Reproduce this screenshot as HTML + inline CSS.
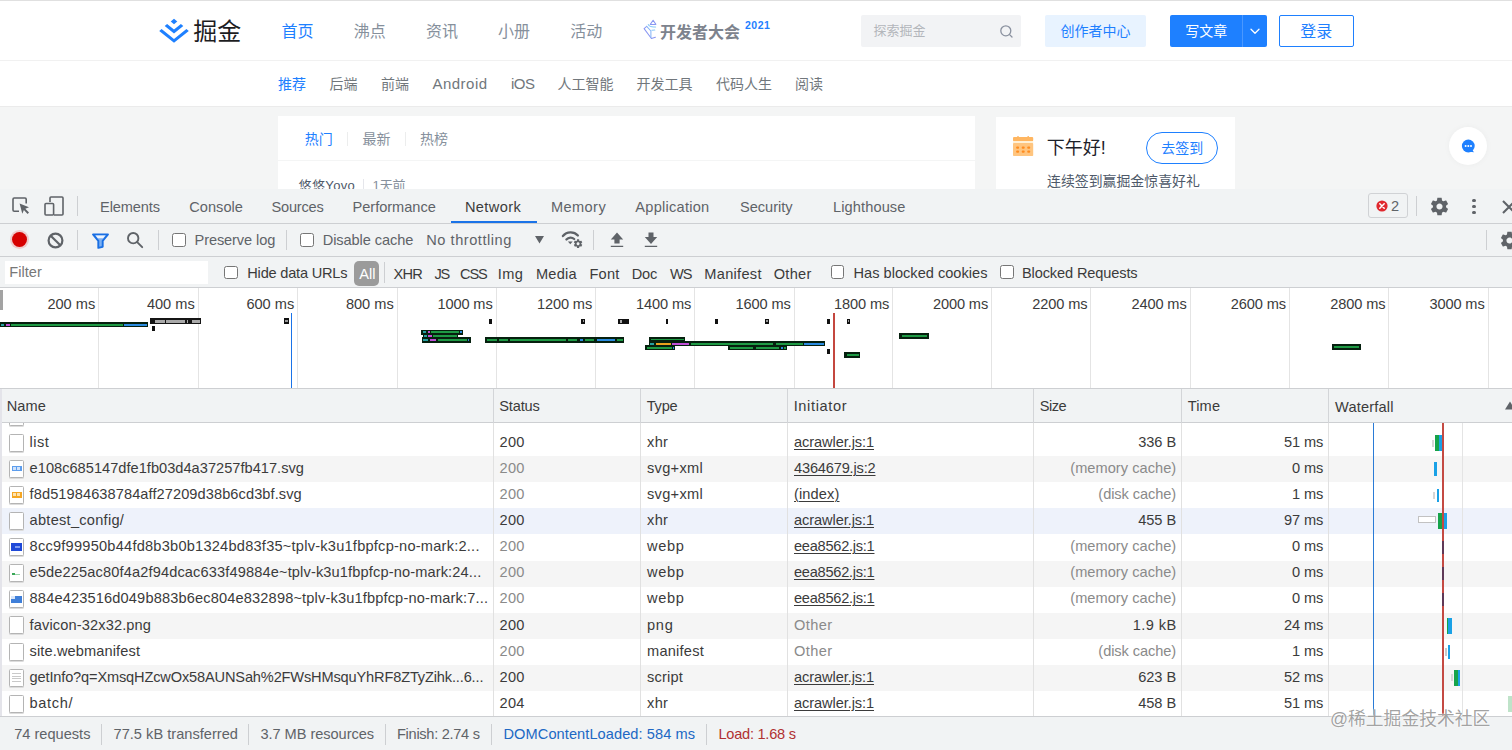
<!DOCTYPE html>
<html lang="zh">
<head>
<meta charset="utf-8">
<title>掘金 - DevTools Network</title>
<style>
*{box-sizing:border-box;margin:0;padding:0}
html,body{width:1512px;height:750px;overflow:hidden;background:#f4f5f5}
body{position:relative;font-family:"Liberation Sans","Noto Sans CJK SC",sans-serif;color:#333}
.abs{position:absolute;white-space:nowrap;display:block}
.cjk{font-family:"Liberation Sans","Noto Sans CJK SC",sans-serif}
.u{text-decoration:underline;text-underline-offset:2px;text-decoration-thickness:1px}
svg{position:absolute;overflow:visible}
.cb{position:absolute;width:13.5px;height:13.5px;border:1.3px solid #767676;border-radius:2.5px;background:#fff}
.fi{position:absolute;width:15px;height:18px;border:1px solid #b4b4b4;border-radius:1.5px;background:#fff;box-shadow:0 1px 0 #dcdcdc}
</style>
</head>
<body>
<!-- page header -->
<div class="abs" style="left:0.0px;top:0.0px;width:1512.0px;height:61.0px;background:#fff;border-top:1px solid #e0e0e0;border-bottom:1px solid #f1f1f1;"></div>
<div class="abs" style="left:0.0px;top:61.0px;width:1512.0px;height:46.0px;background:#fff;border-bottom:1px solid #ebebeb;"></div>
<svg style="left:159px;top:18px" width="30" height="26" viewBox="0 0 30 26"><g fill="#1e80ff"><path d="M15 0.8 L18.3 3.5 L15 6.2 L11.7 3.5 Z"/><path d="M15 15.4 L24.3 7.9 L21.9 6.0 L15 11.6 L8.1 6.0 L5.7 7.9 Z"/><path d="M15 24.8 L29.8 12.9 L27.4 11.0 L15 21.0 L2.6 11.0 L0.2 12.9 Z"/></g></svg>
<span class="abs cjk" style="top:17.0px;font-size:24px;line-height:30px;color:#1d1d1f;left:193.2px;">掘金</span>
<span class="abs cjk" style="top:21.0px;font-size:16px;line-height:22px;color:#1e80ff;left:281.5px;">首页</span>
<span class="abs cjk" style="top:21.0px;font-size:16px;line-height:22px;color:#86909c;left:353.7px;">沸点</span>
<span class="abs cjk" style="top:21.0px;font-size:16px;line-height:22px;color:#86909c;left:425.9px;">资讯</span>
<span class="abs cjk" style="top:21.0px;font-size:16px;line-height:22px;color:#86909c;left:498.1px;">小册</span>
<span class="abs cjk" style="top:21.0px;font-size:16px;line-height:22px;color:#86909c;left:570.3px;">活动</span>
<svg style="left:643px;top:19px" width="14" height="21" viewBox="0 0 14 21"><g fill="none" stroke-width="1.05" stroke-linejoin="round" stroke-linecap="round"><path d="M10.1 1.3 L12.9 5.4 L7.3 5.4 Z" stroke="#8a97f2"/><path d="M5.2 5.6 C6.4 7.8 8.6 8.4 12.6 8" stroke="#86c8f7"/><path d="M3.7 7.4 L1.1 9.6 L8.4 19.5 L12.4 18.2" stroke="#8a97f2"/><path d="M3.7 7.4 L7.9 12 L7.9 18.4" stroke="#86b4f7"/><path d="M8.8 11.2 L11.8 11" stroke="#86c8f7"/></g></svg>
<span class="abs cjk" style="top:22.0px;font-size:16px;line-height:22px;color:#7d838d;left:660.0px;font-weight:700;">开发者大会</span>
<span class="abs " style="top:18.6px;font-size:10.5px;line-height:12px;color:#1e80ff;left:745.0px;letter-spacing:0.535px;font-weight:700;">2021</span>
<div class="abs" style="left:861.0px;top:15.0px;width:159.5px;height:31.5px;background:#f2f3f5;border-radius:2px;"></div>
<span class="abs cjk" style="top:21.3px;font-size:13px;line-height:20px;color:#b3b6bb;left:873.5px;">探索掘金</span>
<svg style="left:999px;top:24px" width="15" height="15" viewBox="0 0 15 15"><g fill="none" stroke="#8a919f" stroke-width="1.3" stroke-linecap="round"><circle cx="6.8" cy="6.8" r="5"/><path d="M10.6 10.6 L13 13"/></g></svg>
<div class="abs" style="left:1045.0px;top:15.0px;width:101.0px;height:31.5px;background:#e8f3ff;border-radius:2px;"></div>
<span class="abs cjk" style="top:21.3px;font-size:14px;line-height:20px;color:#1e80ff;left:1060.5px;">创作者中心</span>
<div class="abs" style="left:1169.8px;top:15.0px;width:97.0px;height:32.0px;background:#1e80ff;border-radius:2px;"></div>
<div class="abs" style="left:1242.0px;top:15.0px;width:1.0px;height:32.0px;background:#4a98ff;"></div>
<span class="abs cjk" style="top:21.3px;font-size:14px;line-height:20px;color:#fff;left:1185.3px;">写文章</span>
<svg style="left:1250px;top:27.5px" width="10" height="7" viewBox="0 0 10 7"><path d="M1 1.2 L5 5.2 L9 1.2" fill="none" stroke="#fff" stroke-width="1.3" stroke-linecap="round" stroke-linejoin="round"/></svg>
<div class="abs" style="left:1278.5px;top:15.0px;width:75.5px;height:31.5px;background:#fff;border:1px solid #1e80ff;border-radius:2px;"></div>
<span class="abs cjk" style="top:21.0px;font-size:16px;line-height:22px;color:#1e80ff;left:1300.3px;">登录</span>
<span class="abs cjk" style="top:73.8px;font-size:14px;line-height:20px;color:#1e80ff;left:278.0px;">推荐</span>
<span class="abs cjk" style="top:73.8px;font-size:14px;line-height:20px;color:#71777c;left:329.5px;">后端</span>
<span class="abs cjk" style="top:73.8px;font-size:14px;line-height:20px;color:#71777c;left:381.0px;">前端</span>
<span class="abs " style="top:73.9px;font-size:15px;line-height:20px;color:#71777c;left:432.5px;letter-spacing:0.471px;">Android</span>
<span class="abs " style="top:73.9px;font-size:15px;line-height:20px;color:#71777c;left:511.0px;letter-spacing:-0.505px;">iOS</span>
<span class="abs cjk" style="top:73.8px;font-size:14px;line-height:20px;color:#71777c;left:557.5px;">人工智能</span>
<span class="abs cjk" style="top:73.8px;font-size:14px;line-height:20px;color:#71777c;left:636.5px;">开发工具</span>
<span class="abs cjk" style="top:73.8px;font-size:14px;line-height:20px;color:#71777c;left:716.0px;">代码人生</span>
<span class="abs cjk" style="top:73.8px;font-size:14px;line-height:20px;color:#71777c;left:795.0px;">阅读</span>
<div class="abs" style="left:278.0px;top:116.2px;width:697.0px;height:75.0px;background:#fff;"></div>
<div class="abs" style="left:278.0px;top:159.5px;width:697.0px;height:1.0px;background:#f4f5f5;"></div>
<span class="abs cjk" style="top:128.8px;font-size:14px;line-height:20px;color:#1e80ff;left:304.7px;">热门</span>
<span class="abs cjk" style="top:128.8px;font-size:14px;line-height:20px;color:#86909c;left:362.5px;">最新</span>
<span class="abs cjk" style="top:128.8px;font-size:14px;line-height:20px;color:#86909c;left:420.0px;">热榜</span>
<div class="abs" style="left:347.2px;top:132.0px;width:1.0px;height:14.0px;background:#eceded;"></div>
<div class="abs" style="left:405.0px;top:132.0px;width:1.0px;height:14.0px;background:#eceded;"></div>
<span class="abs cjk" style="top:175.8px;font-size:13px;line-height:20px;color:#4e5969;left:298.6px;letter-spacing:0.358px;">悠悠Yovo</span>
<div class="abs" style="left:362.9px;top:179.0px;width:1.0px;height:13.0px;background:#e5e6eb;"></div>
<span class="abs cjk" style="top:175.8px;font-size:13px;line-height:20px;color:#86909c;left:372.6px;letter-spacing:-0.178px;">1天前</span>
<div class="abs" style="left:995.7px;top:117.0px;width:239.0px;height:75.0px;background:#fff;"></div>
<svg style="left:1013px;top:136px" width="21" height="21" viewBox="0 0 21 21"><rect x="0" y="0.9" width="20.2" height="4.4" rx="1" fill="#ffb661"/><rect x="0" y="5.3" width="20.2" height="1.7" fill="#fff1d6"/><rect x="0" y="7" width="20.2" height="13" rx="0.8" fill="#ffc57f"/><g fill="#ffb661"><rect x="4.2" y="0" width="1.6" height="1.6" rx=".6"/><rect x="14.4" y="0" width="1.6" height="1.6" rx=".6"/></g><g fill="#ff8c1f"><rect x="3.1" y="10.4" width="3" height="2.3" rx="1"/><rect x="8.7" y="10.4" width="3" height="2.3" rx="1"/><rect x="14.2" y="10.4" width="3" height="2.3" rx="1"/><rect x="3.1" y="14.4" width="3" height="2.3" rx="1"/><rect x="8.7" y="14.4" width="3" height="2.3" rx="1"/><rect x="14.2" y="14.4" width="3" height="2.3" rx="1"/></g></svg>
<span class="abs cjk" style="top:135.9px;font-size:18px;line-height:24px;color:#1d2129;left:1046.8px;">下午好!</span>
<div class="abs" style="left:1146.0px;top:132.4px;width:72.0px;height:31.6px;background:#fff;border:1px solid #1e80ff;border-radius:16px;"></div>
<span class="abs cjk" style="top:137.9px;font-size:14px;line-height:20px;color:#1e80ff;left:1161.3px;">去签到</span>
<span class="abs cjk" style="top:170.8px;font-size:13.9px;line-height:20px;color:#4e5969;left:1047.0px;">连续签到赢掘金惊喜好礼</span>
<div class="abs" style="left:1449px;top:127px;width:38px;height:38px;border-radius:50%;background:#fff;box-shadow:0 0 6px rgba(0,0,0,.04)"></div>
<svg style="left:1461px;top:139px" width="15" height="15" viewBox="0 0 15 15"><circle cx="7.3" cy="7" r="6.4" fill="#1e80ff"/><path d="M10.5 10.5 L13.2 13.2 L8.5 12.8 Z" fill="#1e80ff"/><g fill="#fff"><circle cx="4.6" cy="7" r="1"/><circle cx="7.3" cy="7" r="1"/><circle cx="10" cy="7" r="1"/></g></svg>
<!-- devtools -->
<div class="abs" style="left:0.0px;top:189.0px;width:1512.0px;height:561.0px;background:#fff;"></div>
<div class="abs" style="left:0.0px;top:189.0px;width:1512.0px;height:35.0px;background:#f1f3f4;border-bottom:1px solid #cdcfd2;"></div>
<svg style="left:11px;top:196px" width="20" height="20" viewBox="0 0 20 20"><g fill="none" stroke="#5f6368" stroke-width="1.6"><path d="M8 15.2 H3.2 a1.2 1.2 0 0 1 -1.2 -1.2 V3.2 a1.2 1.2 0 0 1 1.2 -1.2 H14 a1.2 1.2 0 0 1 1.2 1.2 V7.5"/></g><path d="M8.6 7.6 L18 11.2 L14.3 12.7 L18 16.5 L16.6 17.9 L12.9 14.1 L11.3 17.8 Z" fill="#5f6368"/></svg>
<svg style="left:43px;top:195px" width="22" height="22" viewBox="0 0 22 22"><g fill="none" stroke="#5f6368" stroke-width="1.6" stroke-linejoin="round"><path d="M7 7 V3 a1 1 0 0 1 1 -1 H19 a1 1 0 0 1 1 1 V19 a1 1 0 0 1 -1 1 H11"/><rect x="2" y="8.5" width="8.6" height="11.5" rx="1"/></g></svg>
<div class="abs" style="left:77.0px;top:196.0px;width:1.0px;height:20.0px;background:#cdcfd2;"></div>
<span class="abs " style="top:196.6px;font-size:14.6px;line-height:20px;color:#5f6368;left:100.0px;letter-spacing:-0.105px;">Elements</span>
<span class="abs " style="top:196.6px;font-size:14.6px;line-height:20px;color:#5f6368;left:189.2px;letter-spacing:0.036px;">Console</span>
<span class="abs " style="top:196.6px;font-size:14.6px;line-height:20px;color:#5f6368;left:271.5px;letter-spacing:-0.221px;">Sources</span>
<span class="abs " style="top:196.6px;font-size:14.6px;line-height:20px;color:#5f6368;left:352.5px;letter-spacing:-0.022px;">Performance</span>
<span class="abs " style="top:196.6px;font-size:14.6px;line-height:20px;color:#3b3b3b;left:464.9px;letter-spacing:0.396px;">Network</span>
<span class="abs " style="top:196.6px;font-size:14.6px;line-height:20px;color:#5f6368;left:550.9px;letter-spacing:0.416px;">Memory</span>
<span class="abs " style="top:196.6px;font-size:14.6px;line-height:20px;color:#5f6368;left:635.3px;letter-spacing:0.254px;">Application</span>
<span class="abs " style="top:196.6px;font-size:14.6px;line-height:20px;color:#5f6368;left:740.0px;letter-spacing:-0.027px;">Security</span>
<span class="abs " style="top:196.6px;font-size:14.6px;line-height:20px;color:#5f6368;left:833.0px;letter-spacing:0.108px;">Lighthouse</span>
<div class="abs" style="left:450.5px;top:221.0px;width:86.0px;height:2.0px;background:#1a73e8;"></div>
<div class="abs" style="left:1368.0px;top:192.9px;width:40.0px;height:24.8px;background:#f1f3f4;border:1px solid #d0d2d5;border-radius:3px;"></div>
<svg style="left:1376.2px;top:200.1px" width="12" height="12" viewBox="0 0 12 12"><circle cx="6" cy="6" r="5.6" fill="#e0282e"/><path d="M3.8 3.8 L8.2 8.2 M8.2 3.8 L3.8 8.2" stroke="#fff" stroke-width="1.5" stroke-linecap="round"/></svg>
<span class="abs " style="top:196.2px;font-size:14.6px;line-height:20px;color:#5f6368;left:1391.0px;letter-spacing:0.375px;">2</span>
<div class="abs" style="left:1416.0px;top:196.0px;width:1.0px;height:20.0px;background:#cdcfd2;"></div>
<svg style="left:1428.5px;top:195.5px" width="21" height="21" viewBox="0 0 24 24"><path d="M19.43 12.98c.04-.32.07-.64.07-.98s-.03-.66-.07-.98l2.11-1.65c.19-.15.24-.42.12-.64l-2-3.46c-.12-.22-.39-.3-.61-.22l-2.49 1c-.52-.4-1.08-.73-1.69-.98l-.38-2.65C14.46 2.18 14.25 2 14 2h-4c-.25 0-.46.18-.49.42l-.38 2.65c-.61.25-1.17.59-1.69.98l-2.49-1c-.23-.09-.49 0-.61.22l-2 3.46c-.13.22-.07.49.12.64l2.11 1.65c-.04.32-.07.65-.07.98s.03.66.07.98l-2.11 1.65c-.19.15-.24.42-.12.64l2 3.46c.12.22.39.3.61.22l2.49-1c.52.4 1.08.73 1.69.98l.38 2.65c.03.24.24.42.49.42h4c.25 0 .46-.18.49-.42l.38-2.65c.61-.25 1.17-.59 1.69-.98l2.49 1c.23.09.49 0 .61-.22l2-3.46c.12-.22.07-.49-.12-.64l-2.11-1.65zM12 15.5c-1.93 0-3.500-1.570-3.500-3.500s1.570-3.500 3.500-3.500 3.500 1.570 3.500 3.500-1.570 3.500-3.500 3.500z" fill="#5f6368"/></svg>
<div class="abs" style="left:1472.3px;top:198.6px;width:3.4px;height:3.4px;border-radius:50%;background:#5f6368"></div>
<div class="abs" style="left:1472.3px;top:204.6px;width:3.4px;height:3.4px;border-radius:50%;background:#5f6368"></div>
<div class="abs" style="left:1472.3px;top:210.6px;width:3.4px;height:3.4px;border-radius:50%;background:#5f6368"></div>
<svg style="left:1502px;top:199.5px" width="14" height="14" viewBox="0 0 14 14"><path d="M1 1 L13 13 M13 1 L1 13" stroke="#5f6368" stroke-width="2.1"/></svg>
<div class="abs" style="left:0.0px;top:224.0px;width:1512.0px;height:33.0px;background:#f1f3f4;border-bottom:1px solid #cdcfd2;"></div>
<div class="abs" style="left:11.7px;top:231.7px;width:15.6px;height:15.6px;border-radius:50%;background:#d60000;box-shadow:0 0 0 2px rgba(230,60,60,.22)"></div>
<svg style="left:47px;top:231.5px" width="17" height="17" viewBox="0 0 17 17"><g fill="none" stroke="#5f6368" stroke-width="2.2"><circle cx="8.5" cy="8.5" r="6.9"/><path d="M3.7 3.7 L13.3 13.3"/></g></svg>
<div class="abs" style="left:77.0px;top:230.0px;width:1.0px;height:20.0px;background:#cdcfd2;"></div>
<svg style="left:92px;top:232.6px" width="17" height="16" viewBox="0 0 17 16"><path d="M1 1.4 H16 L10.7 7.8 V13.8 L6.3 14.9 V7.8 Z" fill="#7db0f3" stroke="#1a6fe3" stroke-width="1.9" stroke-linejoin="round"/><path d="M3.6 2.6 H13.4 L11.2 5.2 H5.8 Z" fill="#eef4fd"/></svg>
<svg style="left:126px;top:231px" width="18" height="18" viewBox="0 0 18 18"><g fill="none" stroke="#5f6368" stroke-width="1.9" stroke-linecap="round"><circle cx="7.2" cy="7.2" r="5.2"/><path d="M11.2 11.2 L16.2 16.2"/></g></svg>
<div class="abs" style="left:158.0px;top:230.0px;width:1.0px;height:20.0px;background:#cdcfd2;"></div>
<div class="cb" style="left:172px;top:233px"></div>
<span class="abs " style="top:230.0px;font-size:14.6px;line-height:20px;color:#5f6368;left:194.5px;letter-spacing:-0.103px;">Preserve log</span>
<div class="abs" style="left:286.0px;top:230.0px;width:1.0px;height:20.0px;background:#cdcfd2;"></div>
<div class="cb" style="left:300.2px;top:233px"></div>
<span class="abs " style="top:230.0px;font-size:14.6px;line-height:20px;color:#5f6368;left:322.7px;letter-spacing:-0.090px;">Disable cache</span>
<span class="abs " style="top:230.0px;font-size:14.6px;line-height:20px;color:#5f6368;left:426.3px;letter-spacing:0.524px;">No throttling</span>
<svg style="left:535px;top:235.8px" width="9" height="8" viewBox="0 0 9 8"><path d="M0 0 H9 L4.5 7.4 Z" fill="#5f6368"/></svg>
<svg style="left:561px;top:230px" width="22" height="19" viewBox="0 0 22 19"><g fill="none" stroke="#5f6368" stroke-width="2.3" stroke-linecap="round"><path d="M1.9 6.1 C5.9 1.3 12.9 1.3 16.9 5.5"/><path d="M5.4 9.5 C7.6 7.0 11 7.0 13.2 9.0"/></g><path d="M6.9 11.4 H11.7 L9.3 14.2 Z" fill="#5f6368"/><g transform="translate(11.9,8.5) scale(.43)"><path d="M19.43 12.98c.04-.32.07-.64.07-.98s-.03-.66-.07-.98l2.11-1.65c.19-.15.24-.42.12-.64l-2-3.46c-.12-.22-.39-.3-.61-.22l-2.49 1c-.52-.4-1.08-.73-1.69-.98l-.38-2.65C14.46 2.18 14.25 2 14 2h-4c-.25 0-.46.18-.49.42l-.38 2.65c-.61.25-1.17.59-1.69.98l-2.49-1c-.23-.09-.49 0-.61.22l-2 3.46c-.13.22-.07.49.12.64l2.11 1.65c-.04.32-.07.65-.07.98s.03.66.07.98l-2.11 1.65c-.19.15-.24.42-.12.64l2 3.46c.12.22.39.3.61.22l2.49-1c.52.4 1.08.73 1.69.98l.38 2.65c.03.24.24.42.49.42h4c.25 0 .46-.18.49-.42l.38-2.65c.61-.25 1.17-.59 1.69-.98l2.49 1c.23.09.49 0 .61-.22l2-3.46c.12-.22.07-.49-.12-.64l-2.11-1.65zM12 15.5c-1.93 0-3.500-1.570-3.500-3.500s1.570-3.500 3.500-3.500 3.500 1.570 3.500 3.500-1.570 3.500-3.500 3.500z" fill="#5f6368"/></g></svg>
<div class="abs" style="left:593.3px;top:230.0px;width:1.0px;height:20.0px;background:#cdcfd2;"></div>
<svg style="left:609.5px;top:232px" width="14" height="16" viewBox="0 0 14 16"><path d="M7 0.4 L13.2 7.6 H9.6 V11.4 H4.4 V7.6 H0.8 Z M0.8 13.7 H13.2 V15 H0.8 Z" fill="#5f6368"/></svg>
<svg style="left:644.3px;top:232px" width="14" height="16" viewBox="0 0 14 16"><path d="M4.5 0.4 H9.5 V5.0 H13.2 L7 12 L0.8 5.0 H4.5 Z M0.8 13.7 H13.2 V15 H0.8 Z" fill="#5f6368"/></svg>
<div class="abs" style="left:1485.5px;top:230.0px;width:1.0px;height:20.0px;background:#cdcfd2;"></div>
<svg style="left:1498.5px;top:229.5px" width="21" height="21" viewBox="0 0 24 24"><path d="M19.43 12.98c.04-.32.07-.64.07-.98s-.03-.66-.07-.98l2.11-1.65c.19-.15.24-.42.12-.64l-2-3.46c-.12-.22-.39-.3-.61-.22l-2.49 1c-.52-.4-1.08-.73-1.69-.98l-.38-2.65C14.46 2.18 14.25 2 14 2h-4c-.25 0-.46.18-.49.42l-.38 2.65c-.61.25-1.17.59-1.69.98l-2.49-1c-.23-.09-.49 0-.61.22l-2 3.46c-.13.22-.07.49.12.64l2.11 1.65c-.04.32-.07.65-.07.98s.03.66.07.98l-2.11 1.65c-.19.15-.24.42-.12.64l2 3.46c.12.22.39.3.61.22l2.49-1c.52.4 1.08.73 1.69.98l.38 2.65c.03.24.24.42.49.42h4c.25 0 .46-.18.49-.42l.38-2.65c.61-.25 1.17-.59 1.69-.98l2.49 1c.23.09.49 0 .61-.22l2-3.46c.12-.22.07-.49-.12-.64l-2.11-1.65zM12 15.5c-1.93 0-3.500-1.570-3.500-3.500s1.570-3.500 3.500-3.500 3.500 1.570 3.500 3.500-1.570 3.500-3.500 3.500z" fill="#5f6368"/></svg>
<div class="abs" style="left:0.0px;top:257.0px;width:1512.0px;height:31.0px;background:#f1f3f4;border-bottom:1px solid #cdcfd2;"></div>
<div class="abs" style="left:4.5px;top:260.5px;width:203.5px;height:23.0px;background:#fff;"></div>
<span class="abs " style="top:262.3px;font-size:14.6px;line-height:20px;color:#777;left:9.3px;letter-spacing:0.010px;">Filter</span>
<div class="cb" style="left:224px;top:265.5px"></div>
<span class="abs " style="top:262.7px;font-size:14.6px;line-height:20px;color:#3b3b3b;left:247.3px;letter-spacing:-0.217px;">Hide data URLs</span>
<div class="abs" style="left:354.2px;top:260.5px;width:25.0px;height:25.0px;background:#9b9b9b;border-radius:5px;"></div>
<span class="abs " style="top:264.3px;font-size:14.6px;line-height:20px;color:#fff;left:359.3px;letter-spacing:-0.006px;">All</span>
<div class="abs" style="left:383.6px;top:262.0px;width:1.0px;height:21.0px;background:#cdcfd2;"></div>
<span class="abs " style="top:264.3px;font-size:14.6px;line-height:20px;color:#3b3b3b;left:393.5px;letter-spacing:-0.704px;">XHR</span>
<span class="abs " style="top:264.3px;font-size:14.6px;line-height:20px;color:#3b3b3b;left:434.5px;letter-spacing:-1.200px;">JS</span>
<span class="abs " style="top:264.3px;font-size:14.6px;line-height:20px;color:#3b3b3b;left:460.1px;letter-spacing:-1.200px;">CSS</span>
<span class="abs " style="top:264.3px;font-size:14.6px;line-height:20px;color:#3b3b3b;left:497.7px;letter-spacing:0.457px;">Img</span>
<span class="abs " style="top:264.3px;font-size:14.6px;line-height:20px;color:#3b3b3b;left:536.0px;letter-spacing:0.190px;">Media</span>
<span class="abs " style="top:264.3px;font-size:14.6px;line-height:20px;color:#3b3b3b;left:589.5px;letter-spacing:0.199px;">Font</span>
<span class="abs " style="top:264.3px;font-size:14.6px;line-height:20px;color:#3b3b3b;left:631.7px;letter-spacing:-0.184px;">Doc</span>
<span class="abs " style="top:264.3px;font-size:14.6px;line-height:20px;color:#3b3b3b;left:669.9px;letter-spacing:-0.858px;">WS</span>
<span class="abs " style="top:264.3px;font-size:14.6px;line-height:20px;color:#3b3b3b;left:704.3px;letter-spacing:0.293px;">Manifest</span>
<span class="abs " style="top:264.3px;font-size:14.6px;line-height:20px;color:#3b3b3b;left:773.7px;letter-spacing:0.300px;">Other</span>
<div class="cb" style="left:830.6px;top:265.4px"></div>
<span class="abs " style="top:263.1px;font-size:14.6px;line-height:20px;color:#3b3b3b;left:853.5px;letter-spacing:0.007px;">Has blocked cookies</span>
<div class="cb" style="left:1000px;top:265.2px"></div>
<span class="abs " style="top:263.1px;font-size:14.6px;line-height:20px;color:#3b3b3b;left:1022.0px;letter-spacing:-0.134px;">Blocked Requests</span>
<div class="abs" style="left:0.0px;top:288.0px;width:1512.0px;height:100.5px;background:#fff;border-bottom:1px solid #cdcfd2;"></div>
<div class="abs" style="left:98.0px;top:288.0px;width:1.0px;height:100.0px;background:#e4e4e4;"></div>
<span class="abs " style="top:293.8px;font-size:14.6px;line-height:20px;color:#3b3b3b;right:1416.8px;letter-spacing:-0.010px;margin-right:0.010px;">200 ms</span>
<div class="abs" style="left:197.5px;top:288.0px;width:1.0px;height:100.0px;background:#e4e4e4;"></div>
<span class="abs " style="top:293.8px;font-size:14.6px;line-height:20px;color:#3b3b3b;right:1317.3px;letter-spacing:-0.010px;margin-right:0.010px;">400 ms</span>
<div class="abs" style="left:297.0px;top:288.0px;width:1.0px;height:100.0px;background:#e4e4e4;"></div>
<span class="abs " style="top:293.8px;font-size:14.6px;line-height:20px;color:#3b3b3b;right:1217.8px;letter-spacing:-0.010px;margin-right:0.010px;">600 ms</span>
<div class="abs" style="left:396.5px;top:288.0px;width:1.0px;height:100.0px;background:#e4e4e4;"></div>
<span class="abs " style="top:293.8px;font-size:14.6px;line-height:20px;color:#3b3b3b;right:1118.3px;letter-spacing:-0.010px;margin-right:0.010px;">800 ms</span>
<div class="abs" style="left:495.5px;top:288.0px;width:1.0px;height:100.0px;background:#e4e4e4;"></div>
<span class="abs " style="top:293.8px;font-size:14.6px;line-height:20px;color:#3b3b3b;right:1019.3px;letter-spacing:-0.112px;margin-right:0.112px;">1000 ms</span>
<div class="abs" style="left:595.0px;top:288.0px;width:1.0px;height:100.0px;background:#e4e4e4;"></div>
<span class="abs " style="top:293.8px;font-size:14.6px;line-height:20px;color:#3b3b3b;right:919.8px;letter-spacing:-0.112px;margin-right:0.112px;">1200 ms</span>
<div class="abs" style="left:694.2px;top:288.0px;width:1.0px;height:100.0px;background:#e4e4e4;"></div>
<span class="abs " style="top:293.8px;font-size:14.6px;line-height:20px;color:#3b3b3b;right:820.6px;letter-spacing:-0.112px;margin-right:0.112px;">1400 ms</span>
<div class="abs" style="left:793.7px;top:288.0px;width:1.0px;height:100.0px;background:#e4e4e4;"></div>
<span class="abs " style="top:293.8px;font-size:14.6px;line-height:20px;color:#3b3b3b;right:721.1px;letter-spacing:-0.112px;margin-right:0.112px;">1600 ms</span>
<div class="abs" style="left:892.1px;top:288.0px;width:1.0px;height:100.0px;background:#e4e4e4;"></div>
<span class="abs " style="top:293.8px;font-size:14.6px;line-height:20px;color:#3b3b3b;right:622.7px;letter-spacing:-0.112px;margin-right:0.112px;">1800 ms</span>
<div class="abs" style="left:991.0px;top:288.0px;width:1.0px;height:100.0px;background:#e4e4e4;"></div>
<span class="abs " style="top:293.8px;font-size:14.6px;line-height:20px;color:#3b3b3b;right:523.8px;letter-spacing:-0.112px;margin-right:0.112px;">2000 ms</span>
<div class="abs" style="left:1090.3px;top:288.0px;width:1.0px;height:100.0px;background:#e4e4e4;"></div>
<span class="abs " style="top:293.8px;font-size:14.6px;line-height:20px;color:#3b3b3b;right:424.5px;letter-spacing:-0.112px;margin-right:0.112px;">2200 ms</span>
<div class="abs" style="left:1189.5px;top:288.0px;width:1.0px;height:100.0px;background:#e4e4e4;"></div>
<span class="abs " style="top:293.8px;font-size:14.6px;line-height:20px;color:#3b3b3b;right:325.3px;letter-spacing:-0.112px;margin-right:0.112px;">2400 ms</span>
<div class="abs" style="left:1288.8px;top:288.0px;width:1.0px;height:100.0px;background:#e4e4e4;"></div>
<span class="abs " style="top:293.8px;font-size:14.6px;line-height:20px;color:#3b3b3b;right:226.0px;letter-spacing:-0.112px;margin-right:0.112px;">2600 ms</span>
<div class="abs" style="left:1388.3px;top:288.0px;width:1.0px;height:100.0px;background:#e4e4e4;"></div>
<span class="abs " style="top:293.8px;font-size:14.6px;line-height:20px;color:#3b3b3b;right:126.5px;letter-spacing:-0.112px;margin-right:0.112px;">2800 ms</span>
<div class="abs" style="left:1487.5px;top:288.0px;width:1.0px;height:100.0px;background:#e4e4e4;"></div>
<span class="abs " style="top:293.8px;font-size:14.6px;line-height:20px;color:#3b3b3b;right:27.3px;letter-spacing:-0.112px;margin-right:0.112px;">3000 ms</span>
<div class="abs" style="left:0.0px;top:289.5px;width:3.0px;height:20.5px;background:#a3a3a3;"></div>
<div class="abs" style="left:0.0px;top:322.2px;width:148.3px;height:5.1px;background:#06200f;"></div>
<div class="abs" style="left:0.5px;top:323.7px;width:3.5px;height:2.1px;background:#25a0a0;"></div>
<div class="abs" style="left:5.5px;top:323.7px;width:4.5px;height:2.1px;background:#c14fd6;"></div>
<div class="abs" style="left:11.0px;top:323.7px;width:112.0px;height:2.1px;background:#1e9a44;"></div>
<div class="abs" style="left:124.0px;top:323.7px;width:23.3px;height:2.1px;background:#2b8be0;"></div>
<div class="abs" style="left:150.0px;top:318.4px;width:51.2px;height:5.6px;background:#151515;"></div>
<div class="abs" style="left:154.6px;top:319.6px;width:10.0px;height:3.2px;background:#a9a9a9;"></div>
<div class="abs" style="left:165.8px;top:319.6px;width:18.9px;height:3.2px;background:#a9a9a9;"></div>
<div class="abs" style="left:186.5px;top:319.6px;width:1.5px;height:3.2px;background:#a9a9a9;"></div>
<div class="abs" style="left:192.2px;top:319.6px;width:8.1px;height:3.2px;background:#a9a9a9;"></div>
<div class="abs" style="left:152.3px;top:325.8px;width:2.7px;height:5.6px;background:#111;"></div>
<div class="abs" style="left:283.6px;top:318.4px;width:5.4px;height:5.6px;background:#111;"></div>
<div class="abs" style="left:284.9px;top:319.9px;width:2.8px;height:2.6px;background:#999;"></div>
<div class="abs" style="left:291.0px;top:313.0px;width:1.4px;height:75.0px;background:#1a73e8;"></div>
<div class="abs" style="left:489.3px;top:318.8px;width:2.5px;height:5.2px;background:#111;"></div>
<div class="abs" style="left:581.4px;top:318.8px;width:3.9px;height:5.2px;background:#111;"></div>
<div class="abs" style="left:582.7px;top:320.3px;width:1.3px;height:2.2px;background:#999;"></div>
<div class="abs" style="left:618.0px;top:318.8px;width:10.6px;height:5.2px;background:#111;"></div>
<div class="abs" style="left:620.0px;top:320.2px;width:2.2px;height:2.4px;background:#aaa;"></div>
<div class="abs" style="left:665.8px;top:318.8px;width:2.4px;height:5.2px;background:#111;"></div>
<div class="abs" style="left:715.4px;top:318.8px;width:2.6px;height:5.2px;background:#111;"></div>
<div class="abs" style="left:764.5px;top:318.8px;width:4.5px;height:5.2px;background:#111;"></div>
<div class="abs" style="left:765.8px;top:320.3px;width:1.9px;height:2.2px;background:#999;"></div>
<div class="abs" style="left:826.8px;top:318.8px;width:2.8px;height:5.2px;background:#111;"></div>
<div class="abs" style="left:846.8px;top:318.8px;width:3.2px;height:5.2px;background:#111;"></div>
<div class="abs" style="left:848.1px;top:320.3px;width:0.6px;height:2.2px;background:#999;"></div>
<div class="abs" style="left:826.8px;top:348.5px;width:2.8px;height:5.5px;background:#111;"></div>
<div class="abs" style="left:421.4px;top:329.7px;width:41.4px;height:5.1px;background:#06200f;"></div>
<div class="abs" style="left:422.5px;top:331.2px;width:3.0px;height:2.1px;background:#25a0a0;"></div>
<div class="abs" style="left:427.5px;top:331.2px;width:2.5px;height:2.1px;background:#c14fd6;"></div>
<div class="abs" style="left:431.0px;top:331.2px;width:28.0px;height:2.1px;background:#1e9a44;"></div>
<div class="abs" style="left:459.8px;top:331.2px;width:2.0px;height:2.1px;background:#2b8be0;"></div>
<div class="abs" style="left:423.0px;top:333.6px;width:35.0px;height:4.6px;background:#06200f;"></div>
<div class="abs" style="left:424.0px;top:335.1px;width:3.0px;height:1.6px;background:#25a0a0;"></div>
<div class="abs" style="left:427.5px;top:335.1px;width:4.5px;height:1.6px;background:#c14fd6;"></div>
<div class="abs" style="left:433.0px;top:335.1px;width:23.8px;height:1.6px;background:#1e9a44;"></div>
<div class="abs" style="left:422.0px;top:337.2px;width:48.5px;height:5.6px;background:#06200f;"></div>
<div class="abs" style="left:423.0px;top:338.7px;width:5.0px;height:2.6px;background:#25a0a0;"></div>
<div class="abs" style="left:429.5px;top:338.7px;width:6.5px;height:2.6px;background:#c14fd6;"></div>
<div class="abs" style="left:437.5px;top:338.7px;width:29.5px;height:2.6px;background:#1e9a44;"></div>
<div class="abs" style="left:467.8px;top:338.7px;width:1.7px;height:2.6px;background:#2b8be0;"></div>
<div class="abs" style="left:485.4px;top:337.2px;width:138.4px;height:5.6px;background:#06200f;"></div>
<div class="abs" style="left:486.5px;top:338.7px;width:10.5px;height:2.6px;background:#1e9a44;"></div>
<div class="abs" style="left:498.5px;top:338.7px;width:9.5px;height:2.6px;background:#1e9a44;"></div>
<div class="abs" style="left:510.0px;top:338.7px;width:56.0px;height:2.6px;background:#1e9a44;"></div>
<div class="abs" style="left:568.0px;top:338.7px;width:9.0px;height:2.6px;background:#1e9a44;"></div>
<div class="abs" style="left:579.5px;top:338.7px;width:3.5px;height:2.6px;background:#2b8be0;"></div>
<div class="abs" style="left:585.0px;top:338.7px;width:9.0px;height:2.6px;background:#1e9a44;"></div>
<div class="abs" style="left:596.5px;top:338.7px;width:18.0px;height:2.6px;background:#2b8be0;"></div>
<div class="abs" style="left:616.5px;top:338.7px;width:6.3px;height:2.6px;background:#1e9a44;"></div>
<div class="abs" style="left:649.2px;top:337.2px;width:35.4px;height:4.8px;background:#06200f;"></div>
<div class="abs" style="left:651.0px;top:338.7px;width:32.5px;height:1.8px;background:#1e9a44;"></div>
<div class="abs" style="left:649.0px;top:341.4px;width:176.2px;height:5.0px;background:#06200f;"></div>
<div class="abs" style="left:650.0px;top:342.9px;width:3.5px;height:2.0px;background:#25a0a0;"></div>
<div class="abs" style="left:656.3px;top:342.9px;width:14.9px;height:2.0px;background:#e8a21c;"></div>
<div class="abs" style="left:671.8px;top:342.9px;width:17.2px;height:2.0px;background:#c14fd6;"></div>
<div class="abs" style="left:690.5px;top:342.9px;width:82.5px;height:2.0px;background:#1e9a44;"></div>
<div class="abs" style="left:775.5px;top:342.9px;width:27.3px;height:2.0px;background:#1e9a44;"></div>
<div class="abs" style="left:803.8px;top:342.9px;width:20.4px;height:2.0px;background:#2b8be0;"></div>
<div class="abs" style="left:645.0px;top:345.2px;width:30.4px;height:5.1px;background:#06200f;"></div>
<div class="abs" style="left:647.0px;top:346.7px;width:25.0px;height:2.1px;background:#1e9a44;"></div>
<div class="abs" style="left:672.8px;top:346.7px;width:1.6px;height:2.1px;background:#2b8be0;"></div>
<div class="abs" style="left:728.0px;top:345.2px;width:58.8px;height:5.1px;background:#06200f;"></div>
<div class="abs" style="left:729.5px;top:346.7px;width:23.5px;height:2.1px;background:#1e9a44;"></div>
<div class="abs" style="left:756.0px;top:346.7px;width:23.0px;height:2.1px;background:#1e9a44;"></div>
<div class="abs" style="left:780.5px;top:346.7px;width:2.5px;height:2.1px;background:#2b8be0;"></div>
<div class="abs" style="left:783.8px;top:346.7px;width:2.0px;height:2.1px;background:#1e9a44;"></div>
<div class="abs" style="left:844.0px;top:352.3px;width:15.7px;height:5.5px;background:#06200f;"></div>
<div class="abs" style="left:847.0px;top:353.8px;width:11.6px;height:2.5px;background:#1e9a44;"></div>
<div class="abs" style="left:899.0px;top:333.4px;width:29.8px;height:5.6px;background:#06200f;"></div>
<div class="abs" style="left:901.5px;top:334.9px;width:25.0px;height:2.6px;background:#1e9a44;"></div>
<div class="abs" style="left:1332.0px;top:344.3px;width:29.2px;height:5.7px;background:#06200f;"></div>
<div class="abs" style="left:1334.0px;top:345.8px;width:25.0px;height:2.7px;background:#1e9a44;"></div>
<div class="abs" style="left:833.4px;top:313.0px;width:1.4px;height:75.0px;background:#c4473f;"></div>
<div class="abs" style="left:0.0px;top:423.0px;width:1512.0px;height:7.0px;background:#fff;"></div>
<div class="fi" style="left:9px;top:408px;"></div>
<div class="abs" style="left:0.0px;top:430.0px;width:1512.0px;height:26.1px;background:#fff;"></div>
<div class="fi" style="left:9px;top:433.8px;"></div>
<span class="abs " style="top:431.9px;font-size:14.6px;line-height:20px;color:#3b3b3b;left:29.6px;letter-spacing:0.489px;">list</span>
<span class="abs " style="top:431.9px;font-size:14.6px;line-height:20px;color:#3b3b3b;left:499.6px;letter-spacing:0.214px;">200</span>
<span class="abs " style="top:431.9px;font-size:14.6px;line-height:20px;color:#3b3b3b;left:647.0px;letter-spacing:0.340px;">xhr</span>
<span class="abs u" style="top:431.9px;font-size:14.6px;line-height:20px;color:#3b3b3b;left:794.0px;letter-spacing:-0.085px;">acrawler.js:1</span>
<span class="abs " style="top:431.9px;font-size:14.6px;line-height:20px;color:#3b3b3b;right:335.8px;letter-spacing:-0.028px;margin-right:0.028px;">336 B</span>
<span class="abs " style="top:431.9px;font-size:14.6px;line-height:20px;color:#3b3b3b;right:188.6px;letter-spacing:-0.070px;margin-right:0.070px;">51 ms</span>
<div class="abs" style="left:0.0px;top:456.1px;width:1512.0px;height:26.1px;background:#f5f5f5;"></div>
<div class="fi" style="left:9px;top:459.9px;"></div>
<div class="abs" style="left:11.5px;top:465.9px;width:10.0px;height:5.6px;background:#5c9ded;"></div>
<div class="abs" style="left:13.0px;top:467.3px;width:3.0px;height:2.6px;background:#cfe2fb;"></div>
<div class="abs" style="left:17.0px;top:467.3px;width:3.0px;height:2.6px;background:#cfe2fb;"></div>
<span class="abs " style="top:458.0px;font-size:14.6px;line-height:20px;color:#3b3b3b;left:29.6px;letter-spacing:0.025px;">e108c685147dfe1fb03d4a37257fb417.svg</span>
<span class="abs " style="top:458.0px;font-size:14.6px;line-height:20px;color:#8a8a8a;left:499.6px;letter-spacing:0.214px;">200</span>
<span class="abs " style="top:458.0px;font-size:14.6px;line-height:20px;color:#3b3b3b;left:647.0px;letter-spacing:0.295px;">svg+xml</span>
<span class="abs u" style="top:458.0px;font-size:14.6px;line-height:20px;color:#3b3b3b;left:794.0px;letter-spacing:-0.174px;">4364679.js:2</span>
<span class="abs " style="top:458.0px;font-size:14.6px;line-height:20px;color:#8a8a8a;right:335.8px;letter-spacing:0.041px;margin-right:-0.041px;">(memory cache)</span>
<span class="abs " style="top:458.0px;font-size:14.6px;line-height:20px;color:#3b3b3b;right:188.6px;letter-spacing:-0.031px;margin-right:0.031px;">0 ms</span>
<div class="abs" style="left:0.0px;top:482.2px;width:1512.0px;height:26.1px;background:#fff;"></div>
<div class="fi" style="left:9px;top:486.0px;"></div>
<div class="abs" style="left:11.5px;top:492.0px;width:10.0px;height:5.6px;background:#f5a623;"></div>
<div class="abs" style="left:13.0px;top:493.4px;width:3.0px;height:2.6px;background:#fde3b0;"></div>
<div class="abs" style="left:17.0px;top:493.4px;width:3.0px;height:2.6px;background:#fde3b0;"></div>
<span class="abs " style="top:484.1px;font-size:14.6px;line-height:20px;color:#3b3b3b;left:29.6px;letter-spacing:0.084px;">f8d51984638784aff27209d38b6cd3bf.svg</span>
<span class="abs " style="top:484.1px;font-size:14.6px;line-height:20px;color:#8a8a8a;left:499.6px;letter-spacing:0.214px;">200</span>
<span class="abs " style="top:484.1px;font-size:14.6px;line-height:20px;color:#3b3b3b;left:647.0px;letter-spacing:0.295px;">svg+xml</span>
<span class="abs u" style="top:484.1px;font-size:14.6px;line-height:20px;color:#3b3b3b;left:794.0px;letter-spacing:0.127px;">(index)</span>
<span class="abs " style="top:484.1px;font-size:14.6px;line-height:20px;color:#8a8a8a;right:335.8px;letter-spacing:-0.073px;margin-right:0.073px;">(disk cache)</span>
<span class="abs " style="top:484.1px;font-size:14.6px;line-height:20px;color:#3b3b3b;right:188.6px;letter-spacing:-0.031px;margin-right:0.031px;">1 ms</span>
<div class="abs" style="left:0.0px;top:508.3px;width:1512.0px;height:26.1px;background:#eef2fb;"></div>
<div class="fi" style="left:9px;top:512.1px;"></div>
<span class="abs " style="top:510.2px;font-size:14.6px;line-height:20px;color:#3b3b3b;left:29.6px;letter-spacing:0.259px;">abtest_config/</span>
<span class="abs " style="top:510.2px;font-size:14.6px;line-height:20px;color:#3b3b3b;left:499.6px;letter-spacing:0.214px;">200</span>
<span class="abs " style="top:510.2px;font-size:14.6px;line-height:20px;color:#3b3b3b;left:647.0px;letter-spacing:0.340px;">xhr</span>
<span class="abs u" style="top:510.2px;font-size:14.6px;line-height:20px;color:#3b3b3b;left:794.0px;letter-spacing:-0.085px;">acrawler.js:1</span>
<span class="abs " style="top:510.2px;font-size:14.6px;line-height:20px;color:#3b3b3b;right:335.8px;letter-spacing:-0.028px;margin-right:0.028px;">455 B</span>
<span class="abs " style="top:510.2px;font-size:14.6px;line-height:20px;color:#3b3b3b;right:188.6px;letter-spacing:-0.070px;margin-right:0.070px;">97 ms</span>
<div class="abs" style="left:0.0px;top:534.4px;width:1512.0px;height:26.1px;background:#fff;"></div>
<div class="fi" style="left:9px;top:538.2px;"></div>
<div class="abs" style="left:11.2px;top:543.4px;width:10.8px;height:7.4px;background:#1f49d8;"></div>
<div class="abs" style="left:14.5px;top:545.9px;width:5.0px;height:2.0px;background:#7f9cf0;"></div>
<span class="abs " style="top:536.3px;font-size:14.6px;line-height:20px;color:#3b3b3b;left:29.6px;letter-spacing:0.229px;">8cc9f99950b44fd8b3b0b1324bd83f35~tplv-k3u1fbpfcp-no-mark:2...</span>
<span class="abs " style="top:536.3px;font-size:14.6px;line-height:20px;color:#8a8a8a;left:499.6px;letter-spacing:0.214px;">200</span>
<span class="abs " style="top:536.3px;font-size:14.6px;line-height:20px;color:#3b3b3b;left:647.0px;letter-spacing:0.652px;">webp</span>
<span class="abs u" style="top:536.3px;font-size:14.6px;line-height:20px;color:#3b3b3b;left:794.0px;letter-spacing:-0.258px;">eea8562.js:1</span>
<span class="abs " style="top:536.3px;font-size:14.6px;line-height:20px;color:#8a8a8a;right:335.8px;letter-spacing:0.041px;margin-right:-0.041px;">(memory cache)</span>
<span class="abs " style="top:536.3px;font-size:14.6px;line-height:20px;color:#3b3b3b;right:188.6px;letter-spacing:-0.031px;margin-right:0.031px;">0 ms</span>
<div class="abs" style="left:0.0px;top:560.5px;width:1512.0px;height:26.1px;background:#f5f5f5;"></div>
<div class="fi" style="left:9px;top:564.2px;"></div>
<div class="abs" style="left:12.0px;top:573.0px;width:2.5px;height:2.0px;background:#3aa757;"></div>
<div class="abs" style="left:14.5px;top:574.0px;width:5.0px;height:1.0px;background:#9bd3aa;"></div>
<span class="abs " style="top:562.4px;font-size:14.6px;line-height:20px;color:#3b3b3b;left:29.6px;letter-spacing:0.135px;">e5de225ac80f4a2f94dcac633f49884e~tplv-k3u1fbpfcp-no-mark:24...</span>
<span class="abs " style="top:562.4px;font-size:14.6px;line-height:20px;color:#8a8a8a;left:499.6px;letter-spacing:0.214px;">200</span>
<span class="abs " style="top:562.4px;font-size:14.6px;line-height:20px;color:#3b3b3b;left:647.0px;letter-spacing:0.652px;">webp</span>
<span class="abs u" style="top:562.4px;font-size:14.6px;line-height:20px;color:#3b3b3b;left:794.0px;letter-spacing:-0.258px;">eea8562.js:1</span>
<span class="abs " style="top:562.4px;font-size:14.6px;line-height:20px;color:#8a8a8a;right:335.8px;letter-spacing:0.041px;margin-right:-0.041px;">(memory cache)</span>
<span class="abs " style="top:562.4px;font-size:14.6px;line-height:20px;color:#3b3b3b;right:188.6px;letter-spacing:-0.031px;margin-right:0.031px;">0 ms</span>
<div class="abs" style="left:0.0px;top:586.5px;width:1512.0px;height:26.1px;background:#fff;"></div>
<div class="fi" style="left:9px;top:590.3px;"></div>
<div class="abs" style="left:11.2px;top:596.0px;width:10.8px;height:6.6px;background:#3f7fd9;"></div>
<div class="abs" style="left:11.2px;top:596.0px;width:3.5px;height:2.5px;background:#d7e6fa;"></div>
<span class="abs " style="top:588.4px;font-size:14.6px;line-height:20px;color:#3b3b3b;left:29.6px;letter-spacing:0.154px;">884e423516d049b883b6ec804e832898~tplv-k3u1fbpfcp-no-mark:7...</span>
<span class="abs " style="top:588.4px;font-size:14.6px;line-height:20px;color:#8a8a8a;left:499.6px;letter-spacing:0.214px;">200</span>
<span class="abs " style="top:588.4px;font-size:14.6px;line-height:20px;color:#3b3b3b;left:647.0px;letter-spacing:0.652px;">webp</span>
<span class="abs u" style="top:588.4px;font-size:14.6px;line-height:20px;color:#3b3b3b;left:794.0px;letter-spacing:-0.258px;">eea8562.js:1</span>
<span class="abs " style="top:588.4px;font-size:14.6px;line-height:20px;color:#8a8a8a;right:335.8px;letter-spacing:0.041px;margin-right:-0.041px;">(memory cache)</span>
<span class="abs " style="top:588.4px;font-size:14.6px;line-height:20px;color:#3b3b3b;right:188.6px;letter-spacing:-0.031px;margin-right:0.031px;">0 ms</span>
<div class="abs" style="left:0.0px;top:612.6px;width:1512.0px;height:26.1px;background:#f5f5f5;"></div>
<div class="fi" style="left:9px;top:616.4px;"></div>
<span class="abs " style="top:614.5px;font-size:14.6px;line-height:20px;color:#3b3b3b;left:29.6px;letter-spacing:0.131px;">favicon-32x32.png</span>
<span class="abs " style="top:614.5px;font-size:14.6px;line-height:20px;color:#3b3b3b;left:499.6px;letter-spacing:0.214px;">200</span>
<span class="abs " style="top:614.5px;font-size:14.6px;line-height:20px;color:#3b3b3b;left:647.0px;letter-spacing:0.714px;">png</span>
<span class="abs " style="top:614.5px;font-size:14.6px;line-height:20px;color:#8a8a8a;left:794.0px;letter-spacing:0.400px;">Other</span>
<span class="abs " style="top:614.5px;font-size:14.6px;line-height:20px;color:#3b3b3b;right:335.8px;letter-spacing:0.438px;margin-right:-0.438px;">1.9 kB</span>
<span class="abs " style="top:614.5px;font-size:14.6px;line-height:20px;color:#3b3b3b;right:188.6px;letter-spacing:-0.070px;margin-right:0.070px;">24 ms</span>
<div class="abs" style="left:0.0px;top:638.7px;width:1512.0px;height:26.1px;background:#fff;"></div>
<div class="fi" style="left:9px;top:642.5px;"></div>
<span class="abs " style="top:640.6px;font-size:14.6px;line-height:20px;color:#3b3b3b;left:29.6px;letter-spacing:0.112px;">site.webmanifest</span>
<span class="abs " style="top:640.6px;font-size:14.6px;line-height:20px;color:#8a8a8a;left:499.6px;letter-spacing:0.214px;">200</span>
<span class="abs " style="top:640.6px;font-size:14.6px;line-height:20px;color:#3b3b3b;left:647.0px;letter-spacing:0.230px;">manifest</span>
<span class="abs " style="top:640.6px;font-size:14.6px;line-height:20px;color:#8a8a8a;left:794.0px;letter-spacing:0.400px;">Other</span>
<span class="abs " style="top:640.6px;font-size:14.6px;line-height:20px;color:#8a8a8a;right:335.8px;letter-spacing:-0.073px;margin-right:0.073px;">(disk cache)</span>
<span class="abs " style="top:640.6px;font-size:14.6px;line-height:20px;color:#3b3b3b;right:188.6px;letter-spacing:-0.031px;margin-right:0.031px;">1 ms</span>
<div class="abs" style="left:0.0px;top:664.8px;width:1512.0px;height:26.1px;background:#f5f5f5;"></div>
<div class="fi" style="left:9px;top:668.6px;"></div>
<div class="abs" style="left:12.0px;top:673.3px;width:9.0px;height:1.0px;background:#c9c9c9;"></div>
<div class="abs" style="left:12.0px;top:675.7px;width:9.0px;height:1.0px;background:#c9c9c9;"></div>
<div class="abs" style="left:12.0px;top:678.1px;width:9.0px;height:1.0px;background:#c9c9c9;"></div>
<div class="abs" style="left:12.0px;top:680.5px;width:9.0px;height:1.0px;background:#c9c9c9;"></div>
<span class="abs " style="top:666.7px;font-size:14.6px;line-height:20px;color:#3b3b3b;left:29.6px;letter-spacing:-0.158px;">getInfo?q=XmsqHZcwOx58AUNSah%2FWsHMsquYhRF8ZTyZihk...6...</span>
<span class="abs " style="top:666.7px;font-size:14.6px;line-height:20px;color:#3b3b3b;left:499.6px;letter-spacing:0.214px;">200</span>
<span class="abs " style="top:666.7px;font-size:14.6px;line-height:20px;color:#3b3b3b;left:647.0px;letter-spacing:0.188px;">script</span>
<span class="abs u" style="top:666.7px;font-size:14.6px;line-height:20px;color:#3b3b3b;left:794.0px;letter-spacing:-0.085px;">acrawler.js:1</span>
<span class="abs " style="top:666.7px;font-size:14.6px;line-height:20px;color:#3b3b3b;right:335.8px;letter-spacing:-0.028px;margin-right:0.028px;">623 B</span>
<span class="abs " style="top:666.7px;font-size:14.6px;line-height:20px;color:#3b3b3b;right:188.6px;letter-spacing:-0.070px;margin-right:0.070px;">52 ms</span>
<div class="abs" style="left:0.0px;top:690.9px;width:1512.0px;height:26.1px;background:#fff;"></div>
<div class="fi" style="left:9px;top:694.7px;"></div>
<span class="abs " style="top:692.8px;font-size:14.6px;line-height:20px;color:#3b3b3b;left:29.6px;letter-spacing:0.622px;">batch/</span>
<span class="abs " style="top:692.8px;font-size:14.6px;line-height:20px;color:#3b3b3b;left:499.6px;letter-spacing:0.214px;">204</span>
<span class="abs " style="top:692.8px;font-size:14.6px;line-height:20px;color:#3b3b3b;left:647.0px;letter-spacing:0.340px;">xhr</span>
<span class="abs u" style="top:692.8px;font-size:14.6px;line-height:20px;color:#3b3b3b;left:794.0px;letter-spacing:-0.085px;">acrawler.js:1</span>
<span class="abs " style="top:692.8px;font-size:14.6px;line-height:20px;color:#3b3b3b;right:335.8px;letter-spacing:-0.028px;margin-right:0.028px;">458 B</span>
<span class="abs " style="top:692.8px;font-size:14.6px;line-height:20px;color:#3b3b3b;right:188.6px;letter-spacing:-0.070px;margin-right:0.070px;">51 ms</span>
<div class="abs" style="left:0.0px;top:389.0px;width:1512.0px;height:34.0px;background:#f1f3f4;border-bottom:1px solid #cdcfd2;"></div>
<span class="abs " style="top:396.1px;font-size:14.6px;line-height:20px;color:#3b3b3b;left:6.7px;letter-spacing:0.066px;">Name</span>
<span class="abs " style="top:396.1px;font-size:14.6px;line-height:20px;color:#3b3b3b;left:499.3px;letter-spacing:-0.179px;">Status</span>
<span class="abs " style="top:396.1px;font-size:14.6px;line-height:20px;color:#3b3b3b;left:646.7px;letter-spacing:-0.210px;">Type</span>
<span class="abs " style="top:396.1px;font-size:14.6px;line-height:20px;color:#3b3b3b;left:793.7px;letter-spacing:0.627px;">Initiator</span>
<span class="abs " style="top:396.1px;font-size:14.6px;line-height:20px;color:#3b3b3b;left:1039.7px;letter-spacing:-0.473px;">Size</span>
<span class="abs " style="top:396.1px;font-size:14.6px;line-height:20px;color:#3b3b3b;left:1187.7px;letter-spacing:0.152px;">Time</span>
<span class="abs " style="top:396.6px;font-size:14.6px;line-height:20px;color:#3b3b3b;left:1335.0px;letter-spacing:0.184px;">Waterfall</span>
<svg style="left:1504.5px;top:401.2px" width="10" height="9" viewBox="0 0 10 9"><path d="M0 8.5 L5 0.5 L10 8.5 Z" fill="#5f6368"/></svg>
<div class="abs" style="left:493.3px;top:389.0px;width:1.0px;height:34.0px;background:#d3d5d8;"></div>
<div class="abs" style="left:493.3px;top:423.0px;width:1.0px;height:293.0px;background:#e1e1e1;"></div>
<div class="abs" style="left:639.5px;top:389.0px;width:1.0px;height:34.0px;background:#d3d5d8;"></div>
<div class="abs" style="left:639.5px;top:423.0px;width:1.0px;height:293.0px;background:#e1e1e1;"></div>
<div class="abs" style="left:787.3px;top:389.0px;width:1.0px;height:34.0px;background:#d3d5d8;"></div>
<div class="abs" style="left:787.3px;top:423.0px;width:1.0px;height:293.0px;background:#e1e1e1;"></div>
<div class="abs" style="left:1033.3px;top:389.0px;width:1.0px;height:34.0px;background:#d3d5d8;"></div>
<div class="abs" style="left:1033.3px;top:423.0px;width:1.0px;height:293.0px;background:#e1e1e1;"></div>
<div class="abs" style="left:1181.0px;top:389.0px;width:1.0px;height:34.0px;background:#d3d5d8;"></div>
<div class="abs" style="left:1181.0px;top:423.0px;width:1.0px;height:293.0px;background:#e1e1e1;"></div>
<div class="abs" style="left:1327.8px;top:389.0px;width:1.0px;height:34.0px;background:#d3d5d8;"></div>
<div class="abs" style="left:1327.8px;top:423.0px;width:1.0px;height:293.0px;background:#e1e1e1;"></div>
<div class="abs" style="left:0.0px;top:389.0px;width:1.8px;height:327.0px;background:#e4e4ea;"></div>
<div class="abs" style="left:1372.6px;top:423.0px;width:1.4px;height:293.0px;background:#2a7bd6;"></div>
<div class="abs" style="left:1462.0px;top:423.0px;width:1.0px;height:293.0px;background:#e4e4e4;"></div>
<div class="abs" style="left:1432.4px;top:439.5px;width:1.6px;height:7.0px;background:#d6d6d6;"></div>
<div class="abs" style="left:1435.4px;top:435.0px;width:3.6px;height:16.0px;background:#16a34a;"></div>
<div class="abs" style="left:1439.0px;top:435.0px;width:2.6px;height:16.0px;background:#1aa1e6;"></div>
<div class="abs" style="left:1434.0px;top:462.4px;width:2.6px;height:13.5px;background:#1aa1e6;"></div>
<div class="abs" style="left:1433.0px;top:491.7px;width:2.0px;height:7.0px;background:#d6d6d6;"></div>
<div class="abs" style="left:1436.6px;top:488.5px;width:2.4px;height:13.5px;background:#1aa1e6;"></div>
<div class="abs" style="left:1418.4px;top:515.7px;width:17.6px;height:7.4px;background:#fff;border:1px solid #c2c2c2;"></div>
<div class="abs" style="left:1438.0px;top:513.3px;width:4.4px;height:16.0px;background:#16a34a;"></div>
<div class="abs" style="left:1442.4px;top:513.3px;width:4.2px;height:16.0px;background:#1aa1e6;"></div>
<div class="abs" style="left:1446.7px;top:617.7px;width:1.1px;height:16.0px;background:#16a34a;"></div>
<div class="abs" style="left:1447.8px;top:617.7px;width:4.1px;height:16.0px;background:#1aa1e6;"></div>
<div class="abs" style="left:1445.0px;top:647.8px;width:1.8px;height:8.0px;background:#c9c9c9;"></div>
<div class="abs" style="left:1447.8px;top:645.0px;width:2.6px;height:13.5px;background:#1aa1e6;"></div>
<div class="abs" style="left:1451.4px;top:674.4px;width:1.4px;height:7.0px;background:#d6d6d6;"></div>
<div class="abs" style="left:1454.0px;top:669.9px;width:3.8px;height:16.0px;background:#16a34a;"></div>
<div class="abs" style="left:1457.8px;top:669.9px;width:2.6px;height:16.0px;background:#1aa1e6;"></div>
<div class="abs" style="left:1508.3px;top:695.9px;width:3.7px;height:16.0px;background:#bfe3c9;"></div>
<div class="abs" style="left:1442.4px;top:423.0px;width:1.2px;height:293.0px;background:#c44a43;"></div>
<div class="abs" style="left:1441.7px;top:540.9px;width:2.3px;height:13.0px;background:rgba(70,52,92,.8);"></div>
<div class="abs" style="left:1441.7px;top:567.0px;width:2.3px;height:13.0px;background:rgba(70,52,92,.8);"></div>
<div class="abs" style="left:1441.7px;top:593.1px;width:2.3px;height:13.0px;background:rgba(70,52,92,.8);"></div>
<div class="abs" style="left:0.0px;top:716.0px;width:1512.0px;height:34.0px;background:#f1f3f4;border-top:1px solid #cdcfd2;"></div>
<span class="abs " style="top:723.8px;font-size:14.6px;line-height:20px;color:#5f6368;left:14.2px;letter-spacing:0.003px;">74 requests</span>
<span class="abs " style="top:723.8px;font-size:14.6px;line-height:20px;color:#5f6368;left:113.5px;letter-spacing:0.020px;">77.5 kB transferred</span>
<span class="abs " style="top:723.8px;font-size:14.6px;line-height:20px;color:#5f6368;left:260.5px;letter-spacing:-0.055px;">3.7 MB resources</span>
<span class="abs " style="top:723.8px;font-size:14.6px;line-height:20px;color:#5f6368;left:397.0px;letter-spacing:-0.293px;">Finish: 2.74 s</span>
<span class="abs " style="top:723.8px;font-size:14.6px;line-height:20px;color:#2068c4;left:503.5px;letter-spacing:0.074px;">DOMContentLoaded: 584 ms</span>
<span class="abs " style="top:723.8px;font-size:14.6px;line-height:20px;color:#b03030;left:718.5px;letter-spacing:-0.262px;">Load: 1.68 s</span>
<div class="abs" style="left:101.2px;top:723.5px;width:1.0px;height:21.0px;background:#cdcfd2;"></div>
<div class="abs" style="left:248.2px;top:723.5px;width:1.0px;height:21.0px;background:#cdcfd2;"></div>
<div class="abs" style="left:384.7px;top:723.5px;width:1.0px;height:21.0px;background:#cdcfd2;"></div>
<div class="abs" style="left:491.2px;top:723.5px;width:1.0px;height:21.0px;background:#cdcfd2;"></div>
<div class="abs" style="left:705.7px;top:723.5px;width:1.0px;height:21.0px;background:#cdcfd2;"></div>
<span class="abs cjk" style="top:706.7px;font-size:17.8px;line-height:24px;color:rgba(128,128,128,.74);left:1330.0px;text-shadow:0 0 2px #fff,0 0 1px #fff;">@稀土掘金技术社区</span>
</body>
</html>
